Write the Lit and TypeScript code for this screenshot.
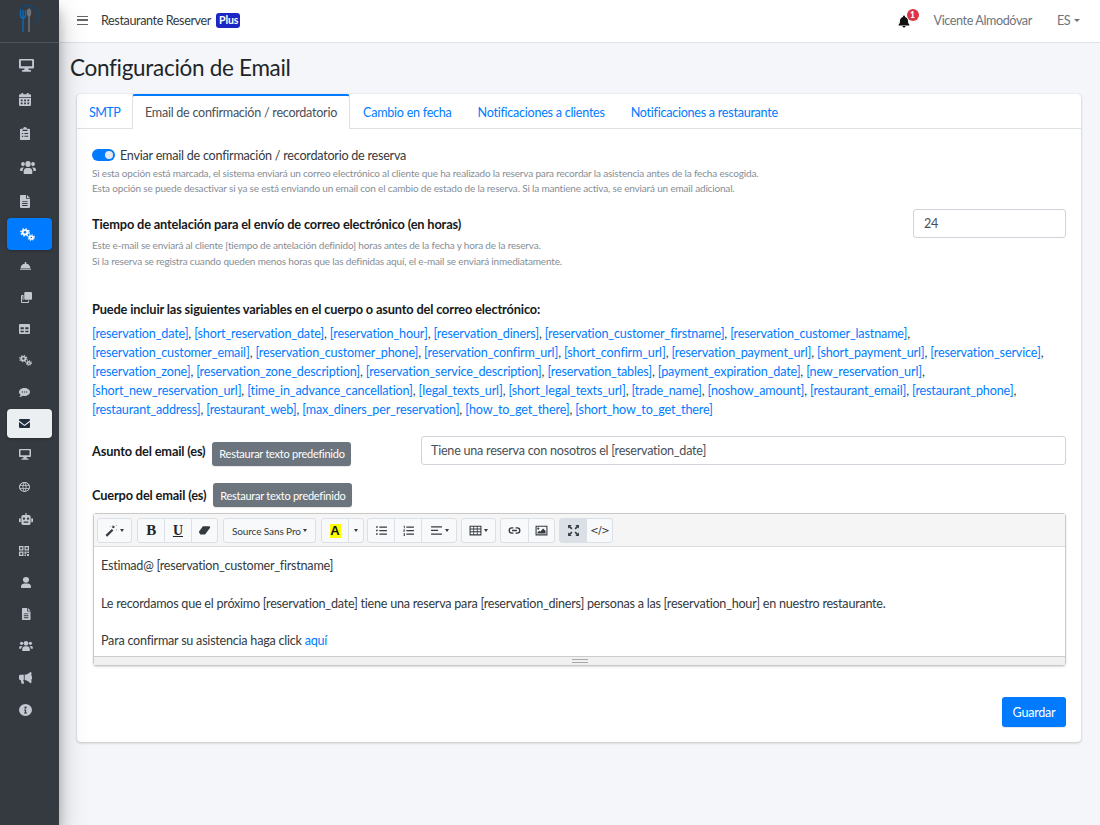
import { LitElement, html, css, svg } from "lit";
import { customElement } from "lit/decorators.js";
import { styleMap } from "lit/directives/style-map.js";

const ICONS: Record<string, any> = {
  desktop: svg`<path d="M2 3.5A1.5 1.5 0 0 1 3.5 2h17A1.5 1.5 0 0 1 22 3.5v12a1.5 1.5 0 0 1-1.500 1.500H14.500l.6 2.500H17a.8.8 0 0 1 0 2.500H7a.8.8 0 0 1 0-2.500h1.900l.6-2.500H3.500A1.500 1.500 0 0 1 2 15.500zM4.500 4.500v9h15v-9z" fill-rule="evenodd"/>`,
  calendar: svg`<path fill-rule="evenodd" d="M6 1h3v2h6V1h3v2h2a2 2 0 0 1 2 2v3H2V5a2 2 0 0 1 2-2h2zM2 9.500h20V21a2 2 0 0 1-2 2H4a2 2 0 0 1-2-2zM5 12v3h3v-3zm5.500 0v3h3v-3zm5.500 0v3h3v-3zM5 17v3h3v-3zm5.500 0v3h3v-3zm5.500 0v3h3v-3z"/>`,
  clipboard: svg`<path fill-rule="evenodd" d="M9 3a3 3 0 0 1 6 0h3.500A1.500 1.500 0 0 1 20 4.500v17a1.500 1.500 0 0 1-1.500 1.500h-13A1.500 1.500 0 0 1 4 21.500v-17A1.500 1.500 0 0 1 5.500 3zM8 5v2h8V5zM7 10.500v2h2v-2zm4 .2v1.600h6v-1.600zM7 15.500v2h2v-2zm4 .2v1.600h6v-1.600z"/>`,
  users: svg`<circle cx="12" cy="8" r="4"/><circle cx="4.500" cy="8" r="2.800"/><circle cx="19.500" cy="8" r="2.800"/><path d="M5.500 20v-2.500a5 5 0 0 1 5-4.500h3a5 5 0 0 1 5 4.500V20a1 1 0 0 1-1 1h-11a1 1 0 0 1-1-1zM0 16a3.500 3.500 0 0 1 3.500-3.500h2.400A6 6 0 0 0 3.700 17H1a1 1 0 0 1-1-1zM24 16a3.500 3.500 0 0 0-3.500-3.500h-2.400a6 6 0 0 1 2.200 4.500H23a1 1 0 0 0 1-1z"/>`,
  file: svg`<path fill-rule="evenodd" d="M5.500 1H14v6.500h6.500v14A1.500 1.500 0 0 1 19 23H5.500A1.500 1.500 0 0 1 4 21.500v-19A1.500 1.500 0 0 1 5.500 1zM15.500 1l5 5h-5zM7.500 11v1.600h9V11zm0 3.500v1.600h9v-1.600zm0 3.500v1.600h9V18z"/>`,
  cogs: svg`<g fill="none" stroke="currentColor"><circle cx="8" cy="8" r="4" stroke-width="3.400"/><circle cx="8" cy="8" r="6.600" stroke-width="2.400" stroke-dasharray="2.590 2.590"/><circle cx="18" cy="17.500" r="2.800" stroke-width="2.800"/><circle cx="18" cy="17.500" r="5" stroke-width="2" stroke-dasharray="1.960 1.960"/></g>`,
  cloche: svg`<path d="M11 6a1.500 1.500 0 1 1 2 0v.700c5 .5 8.500 4 9 9.300H2c.5-5.300 4-8.800 9-9.300zM1 17.500h22v1.500a1 1 0 0 1-1 1H2a1 1 0 0 1-1-1z"/>`,
  clone: svg`<path d="M9.500 1h11.500A2 2 0 0 1 23 3v11.500a2 2 0 0 1-2 2H9.500a2 2 0 0 1-2-2V3a2 2 0 0 1 2-2z"/><path d="M6 7v9a2 2 0 0 0 2 2h9v3a2 2 0 0 1-2 2H3a2 2 0 0 1-2-2V9a2 2 0 0 1 2-2zM3.200 9.200v11.600h11.600V18H8a4 4 0 0 1-4-4V9.200z" fill-rule="evenodd"/>`,
  table: svg`<path fill-rule="evenodd" d="M3 3h18a2 2 0 0 1 2 2v14a2 2 0 0 1-2 2H3a2 2 0 0 1-2-2V5a2 2 0 0 1 2-2zM4 9v3.500h6.500V9zm9.500 0v3.500H20V9zM4 15v3h6.500v-3zm9.500 0v3H20v-3z"/>`,
  comment: svg`<path fill-rule="evenodd" d="M12 2c6.100 0 11 3.900 11 8.800s-4.900 8.800-11 8.800c-1.400 0-2.700-.2-3.900-.6C6.500 20.300 4.200 22 1.500 22c1.500-1.500 2.400-3.200 2.700-5.100C2.200 15.300 1 13.200 1 10.800 1 5.900 5.900 2 12 2zM6.500 9.500v2.500h2.500V9.500zm4.300 0v2.500h2.500V9.500zm4.300 0v2.500h2.500V9.500z"/>`,
  envelope: svg`<path d="M3 4h18a2 2 0 0 1 2 2v.8l-11 7.500L1 6.800V6a2 2 0 0 1 2-2zM1 9.300l11 7.300 11-7.300V18a2 2 0 0 1-2 2H3a2 2 0 0 1-2-2z"/>`,
  globe: svg`<path fill-rule="evenodd" d="M12 1a11 11 0 1 1 0 22 11 11 0 0 1 0-22zM4 8.200h4.300c.4-2 1-3.600 1.800-4.900A9 9 0 0 0 4 8.200zm6 0h4c-.5-2.500-1.300-4.400-2-5.200-.7.800-1.500 2.700-2 5.200zm5.700 0H20a9 9 0 0 0-6.100-4.900c.8 1.300 1.400 2.900 1.800 4.900zM3.300 10v4h4.800a28 28 0 0 1 0-4zm6.600 0a26 26 0 0 0 0 4h4.200a26 26 0 0 0 0-4zm6 0a28 28 0 0 1 0 4h4.800v-4zM4 15.800a9 9 0 0 0 6.100 4.900c-.8-1.300-1.400-2.900-1.800-4.900zm6 0c.5 2.500 1.300 4.400 2 5.200.7-.8 1.500-2.700 2-5.200zm5.700 0c-.4 2-1 3.600-1.800 4.900A9 9 0 0 0 20 15.800z"/>`,
  robot: svg`<path fill-rule="evenodd" d="M11 1h2v3.500h4a3 3 0 0 1 3 3V19a3 3 0 0 1-3 3H7a3 3 0 0 1-3-3V7.500a3 3 0 0 1 3-3h4zM8.500 9a2 2 0 1 0 0 4 2 2 0 0 0 0-4zm7 0a2 2 0 1 0 0 4 2 2 0 0 0 0-4zM8 16v2h8v-2z"/><rect x="0" y="10" width="3" height="7" rx="1.200"/><rect x="21" y="10" width="3" height="7" rx="1.200"/>`,
  qr: svg`<path fill-rule="evenodd" d="M2 2h9v9H2zm2.500 2.500v4h4v-4zM13 2h9v9h-9zm2.500 2.500v4h4v-4zM2 13h9v9H2zm2.500 2.500v4h4v-4zM13 13h4v4.500h-4zM18.500 13H22v3h-3.500zM13 19h3v3h-3zM18 18h4v4h-4z"/>`,
  user: svg`<circle cx="12" cy="7" r="5.500"/><path d="M3 21.500v-2a6.500 6.500 0 0 1 6.500-5.500h5A6.500 6.500 0 0 1 21 19.500v2a1.500 1.500 0 0 1-1.500 1.500h-15A1.500 1.500 0 0 1 3 21.500z"/>`,
  bullhorn: svg`<path d="M21 1.500a1.500 1.500 0 0 1 1.500 1.500v6a2.500 2.500 0 0 1 0 5v6a1.500 1.500 0 0 1-2.400 1.200C17 18.500 14 16.500 10.500 16V6.500C14 6 17 4.500 20.100 2c.3-.3.600-.5.900-.5zM3 6.500h6V16H8l1.500 5.500a1 1 0 0 1-1 1.200H6a1 1 0 0 1-1-.8L3.500 16H3a2.500 2.500 0 0 1-2.500-2.500v-4.500A2.500 2.500 0 0 1 3 6.500z"/>`,
  info: svg`<path fill-rule="evenodd" d="M12 1a11 11 0 1 1 0 22 11 11 0 0 1 0-22zm0 4.500a2 2 0 1 0 0 4 2 2 0 0 0 0-4zM9.500 11v2H11v3.500H9.500v2h5v-2H13V11z"/>`,
  bell: svg`<path d="M12 0a2 2 0 0 1 2 2v.800c3.800.8 6 4 6 7.700 0 5 1.500 6.500 2.700 7.800.6.700.2 1.700-.7 1.700H2c-.9 0-1.300-1-.7-1.700C2.500 17 4 15.500 4 10.500c0-3.700 2.200-6.900 6-7.700V2a2 2 0 0 1 2-2zM9 21h6a3 3 0 0 1-6 0z"/>`,
  wand: svg`<path d="M1 20.500L12.500 9l3 3L4 23.500z"/><path d="M15 2.500l1.100 1.500 1.800-.2-.8 1.700.8 1.700-1.800-.2L15 8.500l-.7-1.800-1.800-.4 1.300-1.300-.2-1.800zM21 2l.8.800-.8.8-.8-.8zM21 10l.9.900-.9.900-.9-.9zM9.500 3.500l.8.800-.8.800-.8-.8z"/>`,
  eraser: svg`<path d="M9 4h11.500a2 2 0 0 1 1.500 3.200l-9 12.300H5.500a2 2 0 0 1-1.800-1.100L2 15.500a2 2 0 0 1 .3-2.200z"/>`,
  ul: svg`<path d="M2 4h3v3H2zM2 10.500h3v3H2zM2 17h3v3H2zM8 4.500h14v2.200H8zM8 11h14v2.200H8zM8 17.500h14v2.200H8z"/>`,
  ol: svg`<path d="M3 3h2v5H3.500V4.500H3zM2 13l2-1.500H2.500V10.300H5.500v1.200L4 13h1.700v1H2zM2.500 17h3v5h-3v-1h1.700v-.9H3v-.8h1.200V18H2.500zM8 4.500h14v2.200H8zM8 11h14v2.200H8zM8 17.500h14v2.200H8z"/>`,
  align: svg`<path d="M2 4h20v2.300H2zM2 10.800h13v2.300H2zM2 17.500h20v2.300H2z"/>`,
  grid: svg`<path fill-rule="evenodd" d="M1 3h22v18H1zm2 2v3.500h5V5zm6.500 0v3.500h5V5zm6.500 0v3.500h5V5zM3 10v3.500h5V10zm6.500 0v3.500h5V10zm6.500 0v3.500h5V10zM3 15v4h5v-4zm6.500 0v4h5v-4zm6.500 0v4h5v-4z"/>`,
  link: svg`<path d="M9 6h-2a6 6 0 0 0 0 12h3v-2.500H7a3.500 3.500 0 0 1 0-7h3V6zM14 6v2.500h3a3.500 3.500 0 0 1 0 7h-3V18h3a6 6 0 0 0 0-12zM7.500 10.800h9v2.400h-9z"/>`,
  image: svg`<path fill-rule="evenodd" d="M1 3h22v18H1zm2 2v14h18V5zm3 1.500a2 2 0 1 1 0 4 2 2 0 0 1 0-4zM4.500 17.500v-2l3-3 2 2 5.500-6 4.500 4.500v4.500z"/>`,
  expand: svg`<path d="M2 2h6.500L6.300 4.200 10 8 8 10 4.200 6.300 2 8.500zM22 2v6.500l-2.200-2.200L16 10l-2-2 3.700-3.800L15.500 2zM2 22v-6.500l2.200 2.200L8 14l2 2-3.700 3.800L8.500 22zM22 22h-6.500l2.200-2.200L14 16l2-2 3.800 3.700 2.200-2.200z"/>`,
};

const VB: Record<string, string> = {
  desktop: "2 2 20 20.5", calendar: "2 1 20 22", clipboard: "4 0 16 23", users: "0 4 24 17", file: "4 1 16.5 22",
  cogs: "0 0 24 24", cloche: "1 4 22 16", clone: "1 1 22 22", table: "1 3 22 18", comment: "1 2 22 20",
  envelope: "1 4 22 16", globe: "1 1 22 22", robot: "0 1 24 21", qr: "2 2 20 20", user: "3 1.500 18 21.500",
  bullhorn: "0.500 1.500 23 21.500", info: "1 1 22 22",
};

const icon = (n: string) => html`<svg class="ic" viewBox="0 0 24 24" fill="currentColor" aria-hidden="true">${ICONS[n]}</svg>`;

const NAV = [
  { i: "desktop", k: "m", w: 15, h: 13, l: 0 }, { i: "calendar", k: "m", w: 12, h: 13, l: 0 }, { i: "clipboard", k: "m", w: 10, h: 13, l: .5 }, { i: "users", k: "m", w: 16, h: 13, l: .5 }, { i: "file", k: "m", w: 10, h: 13, l: .5 },
  { i: "cogs", k: "primary", w: 15, h: 13, l: 1 },
  { i: "cloche", k: "s", w: 11, h: 8.5, l: .5 }, { i: "clone", k: "s", w: 11, h: 11, l: 1.5 }, { i: "table", k: "s", w: 11, h: 10, l: 0 }, { i: "cogs", k: "s", w: 13, h: 11, l: 0 }, { i: "comment", k: "s", w: 11, h: 9, l: 0 },
  { i: "envelope", k: "light", w: 11, h: 9, l: 0 },
  { i: "desktop", k: "t", w: 12, h: 11, l: 0 }, { i: "globe", k: "t", w: 11, h: 10, l: 0 }, { i: "robot", k: "t", w: 14, h: 12, l: 0 }, { i: "qr", k: "t", w: 10, h: 10, l: 0 }, { i: "user", k: "t", w: 10, h: 11, l: 2 }, { i: "file", k: "t", w: 8.5, h: 12, l: 3 }, { i: "users", k: "t", w: 14, h: 10, l: 0 }, { i: "bullhorn", k: "t", w: 13, h: 12, l: 0 }, { i: "info", k: "t", w: 13, h: 12, l: 0 },
];

const VARS = [
  ["reservation_date","short_reservation_date","reservation_hour","reservation_diners","reservation_customer_firstname","reservation_customer_lastname"],
  ["reservation_customer_email","reservation_customer_phone","reservation_confirm_url","short_confirm_url","reservation_payment_url","short_payment_url","reservation_service"],
  ["reservation_zone","reservation_zone_description","reservation_service_description","reservation_tables","payment_expiration_date","new_reservation_url"],
  ["short_new_reservation_url","time_in_advance_cancellation","legal_texts_url","short_legal_texts_url","trade_name","noshow_amount","restaurant_email","restaurant_phone"],
  ["restaurant_address","restaurant_web","max_diners_per_reservation","how_to_get_there","short_how_to_get_there"],
];

@customElement("app-root")
export class AppRoot extends LitElement {
  static styles = css`
    :host { display: block; width: 1100px; height: 825px; overflow: hidden; background: #f4f6f9; font-family: "Lato", "Liberation Sans", sans-serif; font-size: 12.6px; letter-spacing: -.24px; font-variant-ligatures: none; color: #212529; }
    * { box-sizing: border-box; }
    .app { display: flex; height: 825px; }
    .ic { width: 15px; height: 15px; display: block; flex: none; }
    .side { width: 59px; flex: none; background: #343a40; color: #c2c7d0; box-shadow: 0 14px 28px rgba(0,0,0,.25), 0 10px 10px rgba(0,0,0,.22); position: relative; z-index: 2; }
    .brand { height: 43px; border-bottom: 1px solid #4b545c; display: flex; justify-content: center; align-items: flex-start; padding: 6px 3px 0 0; }
    .brand svg { width: 20px; height: 26px; overflow: visible; }
    .nav { padding-top: 5px; display: flex; flex-direction: column; align-items: center; }
    .it { width: 45px; display: flex; justify-content: flex-start; align-items: center; border-radius: 4px; padding-left: 12px; }
    .it.m { height: 34px; }
    .it.s { height: 31.6px; }
    .it.t { height: 31.9px; }
    .it.primary { height: 32px; background: #007bff; color: #fff; box-shadow: 0 1px 3px rgba(0,0,0,.25); }
    .it.light { height: 29px; margin: 1px 0 1px; background: #eceff1; color: #1f2d3d; box-shadow: 0 1px 3px rgba(0,0,0,.25); }
    .main { flex: 1; min-width: 0; display: flex; flex-direction: column; }
    .top { height: 43px; background: #fff; border-bottom: 1px solid #dee2e6; display: flex; align-items: center; padding: 0 20px 1px 18px; color: #343a40; flex: none; }
    .burger { width: 11px; height: 9px; border-top: 1.500px solid #666; border-bottom: 1.500px solid #666; position: relative; margin-right: 13px; }
    .burger::after { content: ""; position: absolute; left: 0; right: 0; top: 2.250px; height: 1.500px; background: #666; }
    .name { letter-spacing: -.39px; }
    .plus { margin-left: 5px; background: #1c26c4; color: #fff; font-size: 10.500px; font-weight: 700; letter-spacing: -.1px; padding: 1px 3px 2px; border-radius: 3px; line-height: 12px; width: 24px; text-align: center; }
    .bell { position: relative; color: #111; margin-left: auto; width: 12px; margin-right: 24px; }
    .bell .ic { width: 12px; height: 13px; margin-top: 1px; }
    .badge { position: absolute; left: 9px; top: -5px; width: 12px; height: 12px; border-radius: 50%; background: #dc3545; color: #fff; font-size: 8.500px; font-weight: 900; letter-spacing: 0; text-align: center; line-height: 12px; }
    .user { color: #6c757d; letter-spacing: -.4px; }
    .lang { color: #6c757d; margin-left: 25px; display: flex; align-items: center; gap: 4px; letter-spacing: -.5px; }
    .caret { width: 0; height: 0; border-left: 3px solid transparent; border-right: 3px solid transparent; border-top: 3.500px solid currentColor; display: block; }
    h1 { margin: 11px 0 0 11px; font-size: 22.500px; font-weight: 400; line-height: 28px; color: #212529; letter-spacing: -.3px; }
    .card { margin: 12px 19px 0 18px; height: 648px; background: #fff; border-radius: 4px; box-shadow: 0 0 1px rgba(0,0,0,.13), 0 1px 3px rgba(0,0,0,.2); display: flex; flex-direction: column; }
    .tabs { height: 35px; border-bottom: 1px solid #dee2e6; display: flex; flex: none; }
    .tab { color: #007bff; padding: 11px 13px 0; height: 34px; white-space: nowrap; letter-spacing: -.27px; }
    .tab:first-child { padding: 11px 0 0 12px; width: 55px; letter-spacing: -.6px; }
    .tab.sel { color: #495057; border-top: 2.500px solid #007bff; border-left: 1px solid #dee2e6; border-right: 1px solid #dee2e6; background: #fff; height: 35px; padding: 9px 12px 0; border-radius: 3px 3px 0 0; }
    .body { padding: 0 15px; flex: 1; display: flex; flex-direction: column; }
    .sw-row { display: flex; align-items: center; gap: 5px; margin-top: 19px; height: 14px; color: #343a40; }
    .sw { width: 23px; height: 12px; border-radius: 6px; background: #007bff; position: relative; flex: none; }
    .sw::after { content: ""; position: absolute; right: 2px; top: 2px; width: 8px; height: 8px; border-radius: 50%; background: #e3e6ea; }
    .help { font-size: 10px; letter-spacing: -.17px; color: #868e96; white-space: nowrap; }
    .h1 { margin-top: 4px; line-height: 15px; }
    .h2 { line-height: 15.500px; }
    .row { display: flex; justify-content: space-between; align-items: center; margin-top: 13px; height: 29px; }
    .lbl { font-weight: 700; color: #16191c; font-size: 12.800px; letter-spacing: -.16px; }
    .inp { height: 29px; border: 1px solid #ced4da; border-radius: 3px; color: #495057; display: flex; align-items: center; padding-left: 10px; background: #fff; }
    .inp.n { width: 153px; }
    .r2 .inp { padding-left: 9px; }
    .vh { margin-top: 31px; height: 18px; line-height: 18px; }
    .vars { margin-top: 6px; line-height: 19px; white-space: nowrap; color: #343a40; letter-spacing: -.15px; }
    .vars a { color: #007bff; }
    .r2 { display: flex; align-items: center; margin-top: 17px; height: 29px; }
    .btn { background: #6c757d; color: #fff; border-radius: 3px; font-size: 11px; letter-spacing: -.25px; display: flex; align-items: center; justify-content: center; height: 24px; width: 139px; box-shadow: 0 1px 1px rgba(0,0,0,.1); }
    .r2 .btn { margin: 6px 0 0 7px; }
    .r2 .inp { width: 645px; margin-left: auto; }
    .r3 { display: flex; align-items: center; margin-top: 18px; height: 24px; }
    .r3 .btn { margin-left: 7px; }
    .ed { margin: 6px 0 0 1px; height: 153px; border: 1px solid #c9c9c9; border-radius: 3px; display: flex; flex-direction: column; box-shadow: 0 1px 2px rgba(0,0,0,.15); }
    .tb { height: 33px; background: #f5f5f5; border-bottom: 1px solid #ddd; display: flex; gap: 4px; padding: 4px 0 0 3px; flex: none; }
    .grp { display: flex; height: 25px; border: 1px solid #dae0e5; border-radius: 3px; background: #f8f9fa; color: #212529; }
    .grp.wide { margin-left: 1px; }
    .grp.tight { margin-left: -1px; }
    .tbtn { display: flex; align-items: center; justify-content: center; gap: 2px; border-left: 1px solid #dae0e5; width: 26.300px; font-size: 10px; letter-spacing: -.1px; color: #343a40; }
    .tbtn:first-child { border-left: none; }
    .tbtn .ic { width: 13px; height: 13px; }
    .tbtn.act { background: #dae0e5; }
    .tbtn .caret { border-left-width: 2.500px; border-right-width: 2.500px; border-top-width: 3px; }
    .w33 { width: 33px; }
    .w91 { width: 91px; }
    .w15 { width: 15px; }
    .w35 { width: 35.500px; }
    .hl { background: #ff0; font-weight: 900; font-size: 13px; line-height: 14px; width: 11px; text-align: center; color: #111; font-family: "Liberation Sans", sans-serif; letter-spacing: 0; }
    .code { font-family: "DejaVu Sans", sans-serif; font-size: 10px; letter-spacing: -.4px; }
    .u { font-family: "Liberation Serif", serif; font-weight: 700; font-size: 14px; letter-spacing: 0; text-decoration: underline; color: #212529; }
    .b { font-family: "Liberation Serif", serif; font-weight: 700; font-size: 15px; letter-spacing: 0; color: #212529; }
    .ec { flex: 1; padding: 10px 7px 0; color: #343a40; line-height: 18.800px; white-space: nowrap; }
    .ec a { color: #007bff; }
    .ec p { margin: 0; min-height: 18.800px; }
    .sb { height: 9px; background: #f0f0f0; border-top: 1px solid #ccc; display: flex; justify-content: center; align-items: center; flex: none; }
    .grip { width: 16px; height: 4px; border-top: 1px solid #a8a8a8; border-bottom: 1px solid #a8a8a8; }
    .foot { display: flex; justify-content: flex-end; margin-top: 31px; }
    .save { background: #007bff; color: #fff; border-radius: 3px; width: 64px; height: 30px; display: flex; align-items: center; justify-content: center; box-shadow: 0 1px 1px rgba(0,0,0,.1); }
  `;

  render() {
    return html`<div class="app">
      <aside class="side">
        <div class="brand">
          <svg viewBox="0 0 20 26" fill="none">
            <path d="M2 4 A10 10 0 1 1 17 17" stroke="#0f4a78" stroke-width="1.300"/>
            <path d="M5 4 V26 M2.500 4 v5 q0 3 2.500 3 q2.500 0 2.500 -3 v-5" stroke="#0b6cbc" stroke-width="1.300"/>
            <ellipse cx="11" cy="6.500" rx="2.200" ry="4" fill="#6c757d"/><path d="M11 10 V26" stroke="#6c757d" stroke-width="1.500"/>
          </svg>
        </div>
        <nav class="nav">
          ${NAV.map((n) => html`<div class="it ${n.k}"><svg viewBox=${VB[n.i]} preserveAspectRatio="none" fill="currentColor" aria-hidden="true" style=${styleMap({ width: n.w + "px", height: n.h + "px", marginLeft: n.l + "px" })}>${ICONS[n.i]}</svg></div>`)}
        </nav>
      </aside>
      <div class="main">
        <header class="top">
          <div class="burger"></div>
          <span class="name">Restaurante Reserver</span>
          <span class="plus">Plus</span>
          <div class="bell">${icon("bell")}<span class="badge">1</span></div>
          <span class="user">Vicente Almodóvar</span>
          <span class="lang">ES<i class="caret"></i></span>
        </header>
        <h1>Configuración de Email</h1>
        <section class="card">
          <div class="tabs">
            <div class="tab">SMTP</div>
            <div class="tab sel">Email de confirmación / recordatorio</div>
            <div class="tab">Cambio en fecha</div>
            <div class="tab">Notificaciones a clientes</div>
            <div class="tab">Notificaciones a restaurante</div>
          </div>
          <div class="body">
            <div class="sw-row"><span class="sw"></span><span>Enviar email de confirmación / recordatorio de reserva</span></div>
            <div class="help h1">Si esta opción está marcada, el sistema enviará un correo electrónico al cliente que ha realizado la reserva para recordar la asistencia antes de la fecha escogida.<br>Esta opción se puede desactivar si ya se está enviando un email con el cambio de estado de la reserva. Si la mantiene activa, se enviará un email adicional.</div>
            <div class="row"><span class="lbl">Tiempo de antelación para el envío de correo electrónico (en horas)</span><div class="inp n">24</div></div>
            <div class="help h2">Este e-mail se enviará al cliente [tiempo de antelación definido] horas antes de la fecha y hora de la reserva.<br>Si la reserva se registra cuando queden menos horas que las definidas aquí, el e-mail se enviará inmediatamente.</div>
            <div class="vh lbl">Puede incluir las siguientes variables en el cuerpo o asunto del correo electrónico:</div>
            <div class="vars">
              ${VARS.map((line, i) => html`<div>${line.map((v, j) => html`<a>[${v}]</a>${j < line.length - 1 || i < VARS.length - 1 ? ", " : ""}`)}</div>`)}
            </div>
            <div class="r2"><span class="lbl">Asunto del email (es)</span><div class="btn">Restaurar texto predefinido</div><div class="inp">Tiene una reserva con nosotros el [reservation_date]</div></div>
            <div class="r3"><span class="lbl">Cuerpo del email (es)</span><div class="btn">Restaurar texto predefinido</div></div>
            <div class="ed">
              <div class="tb">
                <div class="grp"><div class="tbtn w33">${icon("wand")}<i class="caret"></i></div></div>
                <div class="grp wide"><div class="tbtn"><span class="b">B</span></div><div class="tbtn"><span class="u">U</span></div><div class="tbtn">${icon("eraser")}</div></div>
                <div class="grp wide"><div class="tbtn w91">Source Sans Pro<i class="caret"></i></div></div>
                <div class="grp wide"><div class="tbtn"><span class="hl">A</span></div><div class="tbtn w15"><i class="caret"></i></div></div>
                <div class="grp tight"><div class="tbtn">${icon("ul")}</div><div class="tbtn">${icon("ol")}</div><div class="tbtn w35">${icon("align")}<i class="caret"></i></div></div>
                <div class="grp"><div class="tbtn w33">${icon("grid")}<i class="caret"></i></div></div>
                <div class="grp"><div class="tbtn">${icon("link")}</div><div class="tbtn">${icon("image")}</div></div>
                <div class="grp"><div class="tbtn act">${icon("expand")}</div><div class="tbtn"><span class="code">&lt;/&gt;</span></div></div>
              </div>
              <div class="ec">
                <p>Estimad@ [reservation_customer_firstname]</p>
                <p></p>
                <p>Le recordamos que el próximo [reservation_date] tiene una reserva para [reservation_diners] personas a las [reservation_hour] en nuestro restaurante.</p>
                <p></p>
                <p>Para confirmar su asistencia haga click <a>aquí</a></p>
              </div>
              <div class="sb"><div class="grip"></div></div>
            </div>
            <div class="foot"><div class="save">Guardar</div></div>
          </div>
        </section>
      </div>
    </div>`;
  }
}
